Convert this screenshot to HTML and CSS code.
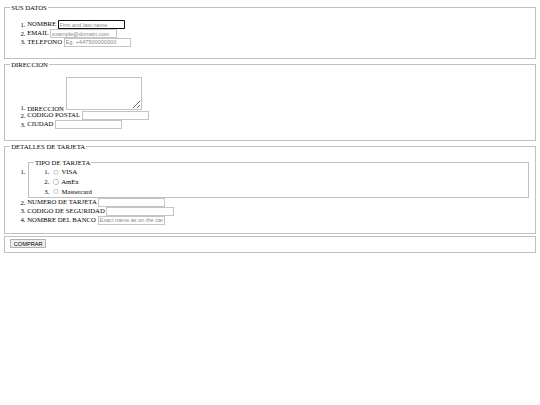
FILE: index.html
```html
<!DOCTYPE html>
<html>
<head>
<meta charset="utf-8">
<link rel="stylesheet" href="styles.css">
</head>
<body class="page">
<form class="form">
  <fieldset class="group">
    <legend>SUS DATOS</legend>
    <ol class="list">
      <li><label>NOMBRE</label> <input class="field focused" type="text" placeholder="First and last name"></li>
      <li><label>EMAIL</label> <input class="field" type="text" placeholder="example@domain.com"></li>
      <li><label>TELEFONO</label> <input class="field" type="text" placeholder="Eg. +447500000000"></li>
    </ol>
  </fieldset>
  <fieldset class="group">
    <legend>DIRECCION</legend>
    <ol class="list">
      <li><label>DIRECCION</label> <textarea class="area"></textarea></li>
      <li><label>CODIGO POSTAL</label> <input class="field" type="text"></li>
      <li><label>CIUDAD</label> <input class="field" type="text"></li>
    </ol>
  </fieldset>
  <fieldset class="group">
    <legend>DETALLES DE TARJETA</legend>
    <ol class="list tight">
      <li>
        <fieldset class="inner">
          <legend>TIPO DE TARJETA</legend>
          <ol class="choices">
            <li><input class="radio" type="radio" name="card"> <label>VISA</label></li>
            <li><input class="radio" type="radio" name="card"> <label>AmEx</label></li>
            <li><input class="radio" type="radio" name="card"> <label>Mastercard</label></li>
          </ol>
        </fieldset>
      </li>
      <li><label>NUMERO DE TARJETA</label> <input class="field" type="text"></li>
      <li><label>CODIGO DE SEGURIDAD</label> <input class="field" type="text"></li>
      <li><label>NOMBRE DEL BANCO</label> <input class="field" type="text" placeholder="Exact name as on the card"></li>
    </ol>
  </fieldset>
  <fieldset class="group">
    <button class="btn" type="button">COMPRAR</button>
  </fieldset>
</form>
</body>
</html>
```
FILE: styles.css
```css
html { zoom: 0.421875; }
.page {
  margin: 8px;
  font-family: "Liberation Serif", "Times New Roman", serif;
  font-size: 16px;
  color: #000;
  background: #fff;
}
.group,
.inner {
  margin: 0 2px;
  padding: 0.35em 0.75em 0.625em;
  border: 2px groove #c0c0c0;
}
.group { margin: 2px 2px 4px; }
.inner { padding-top: 3px; padding-bottom: 2px; }
.list { margin: 16px 0; padding-left: 40px; }
.tight { margin-bottom: 10px; }
.choices { margin: 0; padding-left: 40px; }
.choices li { line-height: 23px; }
.field {
  box-sizing: border-box;
  font-family: "Liberation Sans", Arial, sans-serif;
  font-size: 13.333px;
  width: 159px;
  height: 21px;
  padding: 1px 2px;
  border: 2px solid #c4c4c4;
}
.field::placeholder { color: #8a8a8a; }
.focused { border-color: #111; border-radius: 2px; }
.area {
  box-sizing: border-box;
  width: 180px;
  height: 80px;
  border: 2px solid #c4c4c4;
  vertical-align: baseline;
}
.radio { margin: 3px 3px 0 5px; vertical-align: -2px; }
.btn {
  font-family: "Liberation Sans", Arial, sans-serif;
  font-size: 13.333px;
  padding: 1px 6px;
  border: 2px solid #b0b0b0;
  background: #efefef;
  border-radius: 2px;
}
```
